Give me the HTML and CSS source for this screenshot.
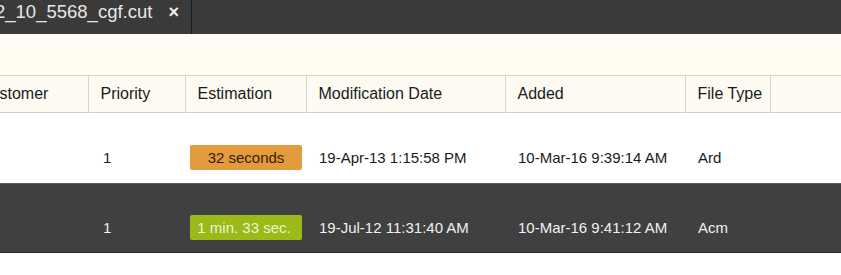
FILE: index.html
```html
<!DOCTYPE html>
<html>
<head>
<meta charset="utf-8">
<link rel="stylesheet" href="styles.css">
</head>
<body>
<div class="tabbar">
  <div class="tab"><span class="tab-title">2_10_5568_cgf.cut</span><span class="tab-close">×</span></div>
</div>
<div class="notice"></div>
<table class="grid">
  <colgroup>
    <col class="c-customer"><col class="c-priority"><col class="c-est"><col class="c-mod"><col class="c-added"><col class="c-type"><col class="c-rest">
  </colgroup>
  <thead>
    <tr><th>Customer</th><th>Priority</th><th>Estimation</th><th>Modification Date</th><th>Added</th><th>File Type</th><th></th></tr>
  </thead>
  <tbody>
    <tr class="row-light"><td></td><td class="pri">1</td><td class="est"><span class="badge badge-orange">32 seconds</span></td><td>19-Apr-13 1:15:58 PM</td><td>10-Mar-16 9:39:14 AM</td><td>Ard</td><td></td></tr>
    <tr class="row-dark"><td></td><td class="pri">1</td><td class="est"><span class="badge badge-green">1 min. 33 sec.</span></td><td>19-Jul-12 11:31:40 AM</td><td>10-Mar-16 9:41:12 AM</td><td>Acm</td><td></td></tr>
  </tbody>
</table>
</body>
</html>
```
FILE: styles.css
```css
html, body {
  margin: 0;
  padding: 0;
  background: #ffffff;
  overflow: hidden;
  font-family: "Liberation Sans", Arial, sans-serif;
}
.tabbar {
  height: 34px;
  background: #3a3a3a;
  display: flex;
}
.tab {
  width: 192px;
  border-right: 1px solid #1e1e1e;
  display: flex;
  align-items: flex-start;
  padding-top: 1px;
  box-sizing: border-box;
  overflow: hidden;
  white-space: nowrap;
}
.tab-title {
  color: #e6e6e6;
  font-size: 18.5px;
  margin-left: -5px;
  line-height: 22px;
}
.tab-close {
  color: #f0f0f0;
  font-size: 18px;
  font-weight: bold;
  margin-left: 16px;
  line-height: 22px;
}
.notice {
  height: 41px;
  background: #fffcf2;
}
.grid {
  border-collapse: collapse;
  table-layout: fixed;
  margin-left: -33px;
  width: 874px;
  font-size: 15px;
}
.c-customer { width: 121px; }
.c-priority { width: 97px; }
.c-est { width: 121px; }
.c-mod { width: 199px; }
.c-added { width: 180px; }
.c-type { width: 85px; }
.c-rest { width: 71px; }
.grid thead tr {
  background: #fdfaf2;
  border-top: 1px solid #d9d6d0;
  border-bottom: 1px solid #cfcfcf;
}
.grid th {
  height: 36px;
  padding: 0 0 0 12px;
  text-align: left;
  font-weight: normal;
  font-size: 16px;
  color: #1a1a1a;
  border-right: 1px solid #d4d4d4;
  white-space: nowrap;
}
.grid th:last-child { border-right: none; }
.grid td {
  padding: 0 0 0 13px;
  white-space: nowrap;
  vertical-align: middle;
}
.grid td.pri { padding-left: 15px; }
.grid td.est { padding-left: 5px; }
.row-light {
  background: #ffffff;
  color: #1a1a1a;
}
.row-light td { height: 51px; padding-top: 19px; }
.row-dark {
  background: #404040;
  color: #f0f0f0;
  border-top: 1px solid #5a5a5a;
  border-bottom: 1px solid #2a2a2a;
}
.row-dark td { height: 49px; padding-top: 19px; }
.badge {
  display: inline-block;
  width: 112px;
  height: 25px;
  line-height: 25px;
  border-radius: 2px;
  text-align: center;
  font-size: 15px;
  box-sizing: border-box;
}
.badge-orange {
  background: #e49b3d;
  color: #3a1e00;
}
.badge-green {
  background: #9bba1a;
  color: #eef4cc;
  padding-right: 4px;
}
```
